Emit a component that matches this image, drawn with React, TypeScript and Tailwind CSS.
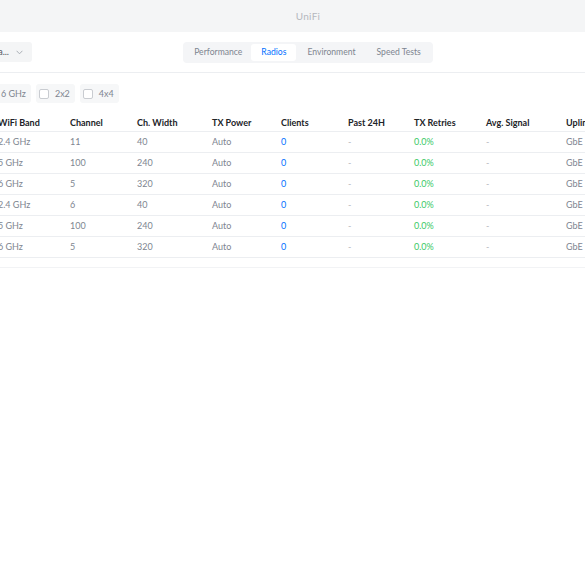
import React from "react";

const cols = [
  { key: "band", label: "WiFi Band", w: "w-[72px]" },
  { key: "ch", label: "Channel", w: "w-[67px]" },
  { key: "cw", label: "Ch. Width", w: "w-[75px]" },
  { key: "tx", label: "TX Power", w: "w-[69px]" },
  { key: "cl", label: "Clients", w: "w-[67px]" },
  { key: "p24", label: "Past 24H", w: "w-[66px]" },
  { key: "ret", label: "TX Retries", w: "w-[72px]" },
  { key: "sig", label: "Avg. Signal", w: "w-[80px]" },
  { key: "up", label: "Uplink", w: "w-[70px]" },
];

const rows = [
  ["2.4 GHz", "11", "40"],
  ["5 GHz", "100", "240"],
  ["6 GHz", "5", "320"],
  ["2.4 GHz", "6", "40"],
  ["5 GHz", "100", "240"],
  ["6 GHz", "5", "320"],
];

function Check({ label }: { label: string }) {
  return (
    <div className="flex h-[19px] shrink-0 items-center gap-[6px] rounded-[3px] bg-[#f6f7f8] pl-[3px] pr-[5px]">
      <span className="h-[10px] w-[10px] rounded-[2px] border border-[#c9ccd1] bg-white" />
      <span>{label}</span>
    </div>
  );
}

export default function App() {
  return (
    <div
      className="h-[585px] w-[585px] overflow-hidden bg-white text-[9px] text-[#7e8590]"
      style={{ fontFamily: "Lato, 'Noto Sans', sans-serif" }}
    >
      {/* top bar */}
      <div className="h-[32px] w-full bg-[#f4f5f6]">
        <div className="flex h-full w-[616px] items-center justify-center text-[10px] tracking-[0.3px] text-[#b4b8be]">
          UniFi
        </div>
      </div>

      {/* tab row */}
      <div className="ml-[-40px] grid h-[41px] w-[696px] grid-cols-[1fr_auto_1fr] items-center border-b border-[#eceef1]">
        <div className="flex pl-[10px]">
          <div className="flex h-[20px] w-[62px] items-center justify-end gap-[7px] overflow-hidden rounded-[3px] bg-[#f4f5f6] pr-[9px] text-[#50565e]">
            <span className="whitespace-nowrap">Area...</span>
            <svg width="7" height="5" viewBox="0 0 7 5" fill="none">
              <path d="M0.6 0.8 L3.5 3.8 L6.4 0.8" stroke="#a3a8af" strokeWidth="0.9" />
            </svg>
          </div>
        </div>
        <div className="flex h-[21px] items-center rounded-[4px] bg-[#f4f5f7] p-[2px] text-[8.6px]">
          <div className="flex h-full items-center px-[9px]">Performance</div>
          <div className="flex h-full items-center rounded-[3px] bg-white px-[10px] text-[#006fff]">Radios</div>
          <div className="flex h-full items-center px-[11px]">Environment</div>
          <div className="flex h-full items-center px-[10px]">Speed Tests</div>
        </div>
        <div />
      </div>

      {/* filters */}
      <div className="ml-[-72px] mt-[11px] flex gap-[5px]">
        <Check label="5 GHz" />
        <Check label="6 GHz" />
        <Check label="2x2" />
        <Check label="4x4" />
      </div>

      {/* table */}
      <div className="ml-[-2px] mt-[11px] w-[700px]">
        <div className="flex h-[18px] items-center border-b border-[#eceef1] font-bold text-[#212327]">
          {cols.map((c) => (
            <div key={c.key} className={`${c.w} shrink-0 whitespace-nowrap`}>
              {c.label}
            </div>
          ))}
        </div>
        {rows.map((r, i) => (
          <div key={i} className="flex h-[21px] items-center border-b border-[#eceef1]">
            <div className="w-[72px] shrink-0">{r[0]}</div>
            <div className="w-[67px] shrink-0">{r[1]}</div>
            <div className="w-[75px] shrink-0">{r[2]}</div>
            <div className="w-[69px] shrink-0">Auto</div>
            <div className="w-[67px] shrink-0 text-[#006fff]">0</div>
            <div className="w-[66px] shrink-0 text-[#b4b8be]">-</div>
            <div className="w-[72px] shrink-0 text-[#39c966]">0.0%</div>
            <div className="w-[80px] shrink-0 text-[#b4b8be]">-</div>
            <div className="w-[70px] shrink-0">GbE</div>
          </div>
        ))}
        <div className="h-[10px] border-b border-[#f2f3f5]" />
      </div>
    </div>
  );
}
